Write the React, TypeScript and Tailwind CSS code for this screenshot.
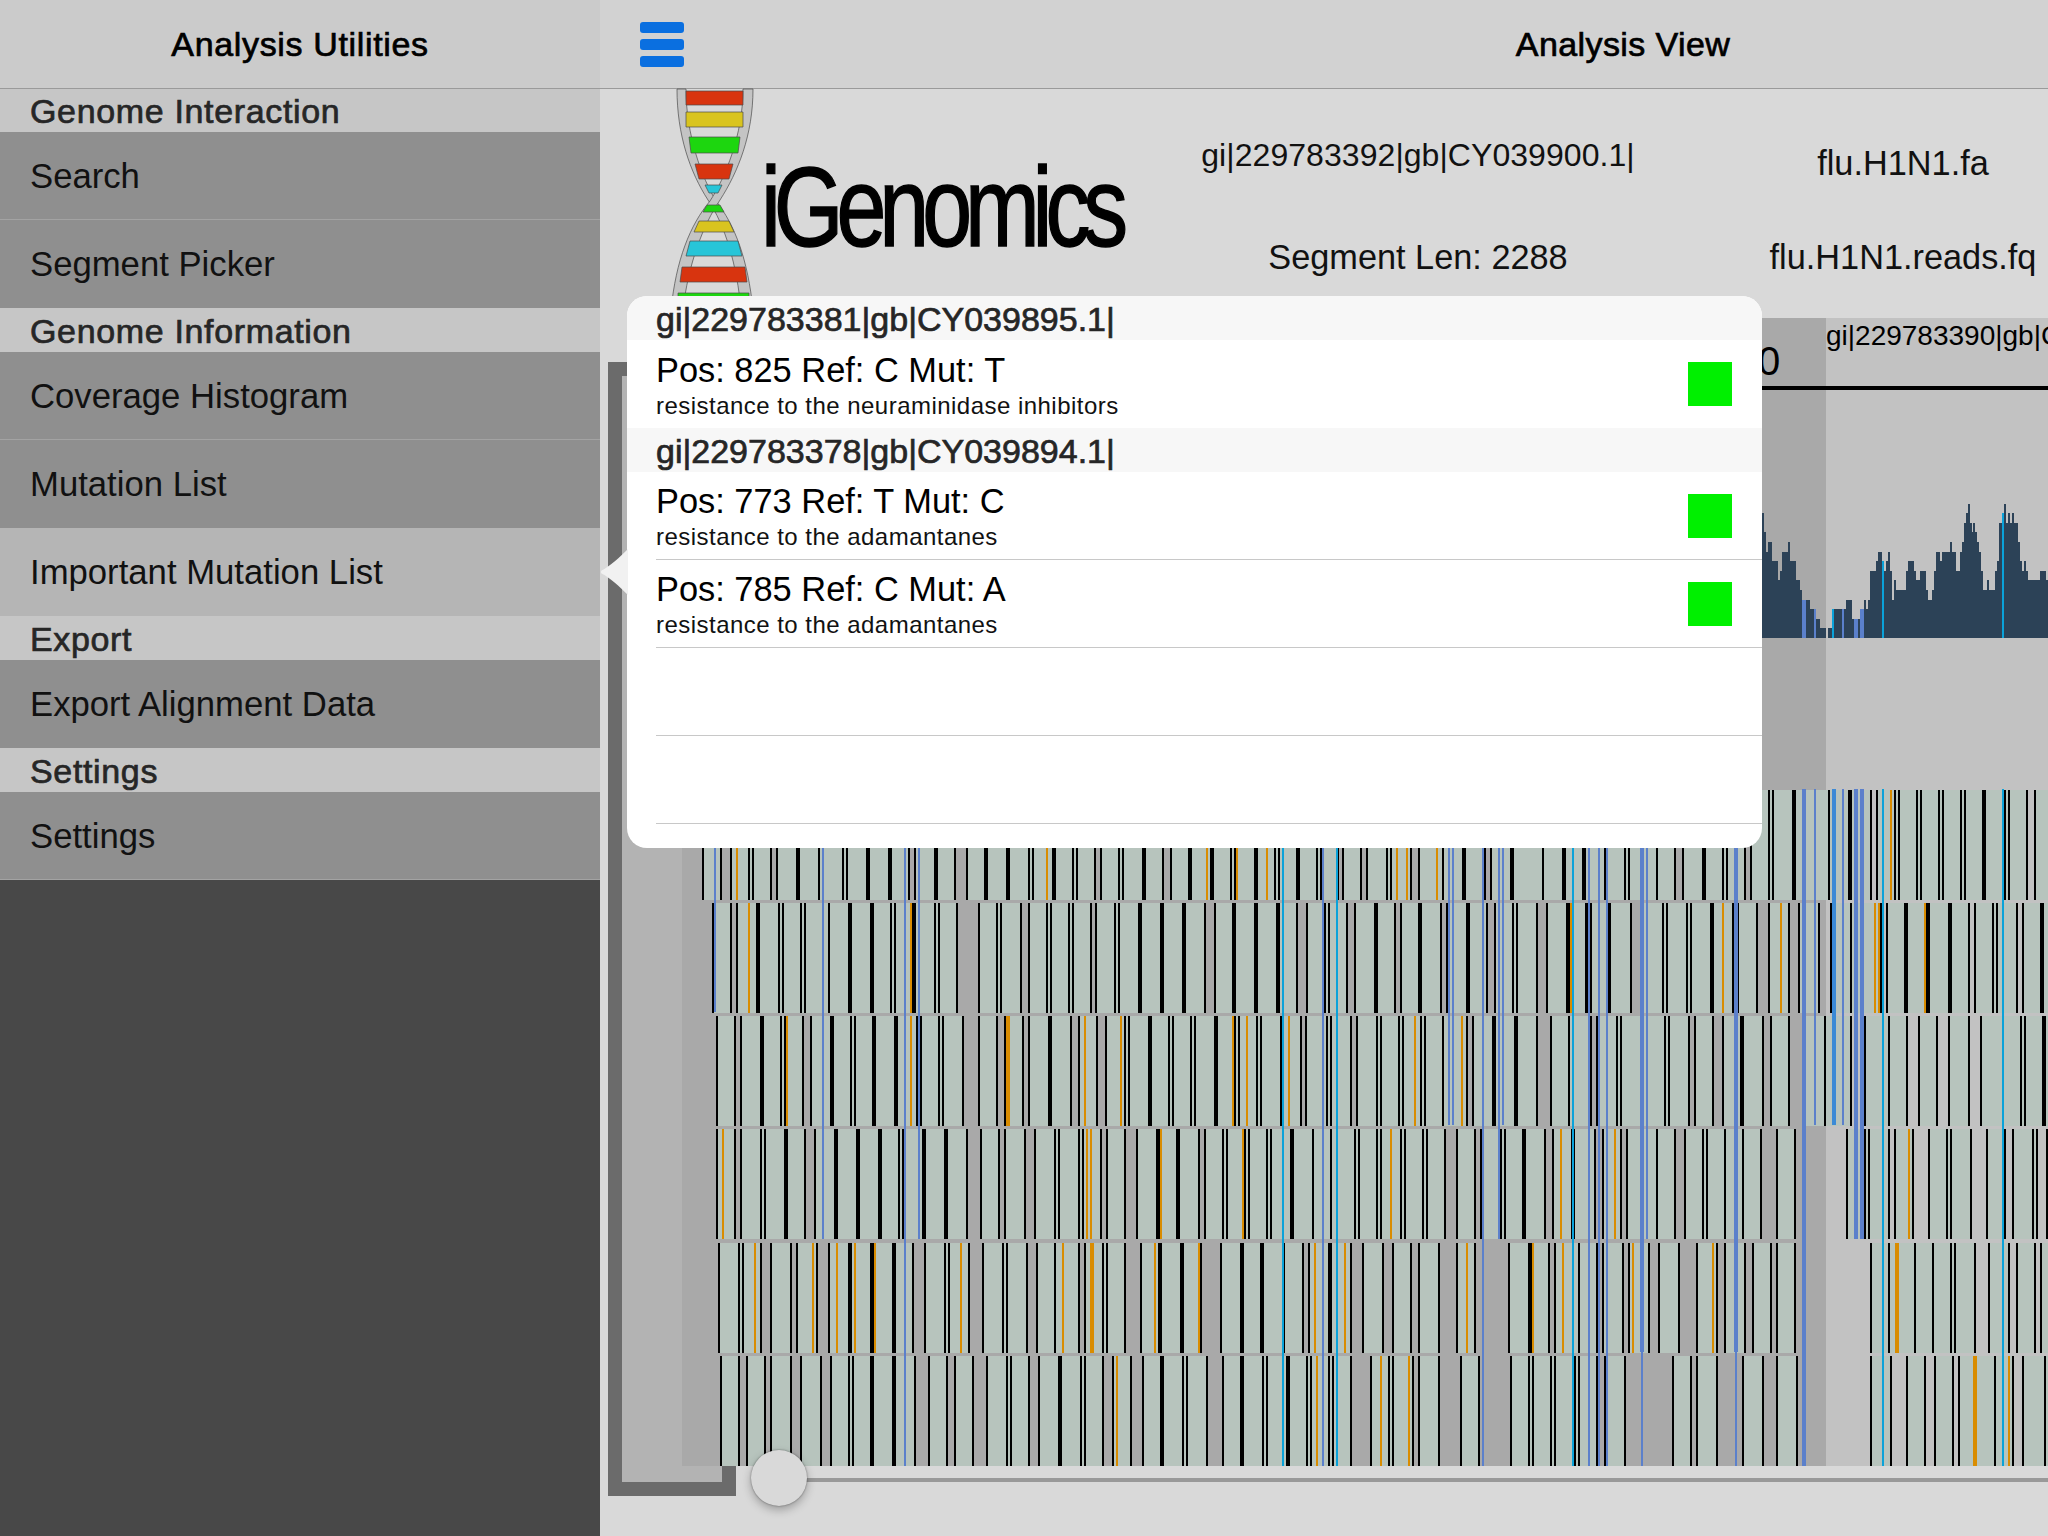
import React from "react";

const sans = "font-['Liberation_Sans',Arial,sans-serif]";
const medium = "[-webkit-text-stroke:0.7px_currentColor]";

type MenuItem = { label: string; selected?: boolean };
const menu: { title: string; items: MenuItem[] }[] = [
  { title: "Genome Interaction", items: [{ label: "Search" }, { label: "Segment Picker" }] },
  { title: "Genome Information", items: [{ label: "Coverage Histogram" }, { label: "Mutation List" }, { label: "Important Mutation List", selected: true }] },
  { title: "Export", items: [{ label: "Export Alignment Data" }] },
  { title: "Settings", items: [{ label: "Settings" }] },
];

// read rows, page coordinates. plain number = thin black, w = wide, o = orange, O = wide orange
const rows = [
  {
    y: 790, start: 702, ends: [[702, 2048]], gaps: [],
    bars: "703 721 731 o737 749 753 771 777 w798 819 843 847 w868 w890 909 915 w936 955 967 w986 w1008 1029 1033 o1047 w1054 1073 1077 1095 1101 1119 1123 w1144 1163 1171 w1190 o1207 w1212 1231 1235 o1237 w1256 o1267 1275 1279 w1298 1317 1321 1338 1343 1361 1367 1387 1391 o1397 o1407 1411 1419 o1437 1443 w1464 1485 1491 w1512 1543 w1564 w1584 1605 1625 1629 1657 1675 1683 w1704 1723 1727 1745 1751 1769 1773 w1794 1829 w1850 1871 1877 o1891 1895 1899 1917 1921 1939 1943 1961 1965 w1984 2005 2009 2027 2035",
  },
  {
    y: 903, start: 712, ends: [[712, 2048]], gaps: [[957, 979], [1631, 1640]],
    bars: "713 731 737 o749 w758 779 783 801 805 829 w850 w872 891 895 o911 w914 935 939 957 979 997 1001 1021 1029 1047 1051 1069 1073 1091 1096 1115 1119 w1140 w1162 w1184 1205 1215 w1234 w1256 w1278 1297 1307 1325 1329 1347 1355 w1376 1395 1401 w1420 1441 1447 w1468 1487 1495 1513 1517 1537 1547 w1568 o1571 w1587 1591 w1609 1631 1663 1667 1687 1691 w1712 o1723 w1734 1738 1757 1769 o1781 1789 1799 1819 1831 1851 o1875 o1879 1881 1887 w1906 o1925 w1928 w1950 1969 1975 1993 1997 2017 2023 w2042",
  },
  {
    y: 1016, start: 716, ends: [[716, 2048]], gaps: [[963, 979], [1789, 1803]],
    bars: "717 735 741 w762 781 785 o787 803 811 w832 851 855 w874 w896 o911 917 921 939 943 963 979 997 1005 O1008 1023 1029 w1050 1071 1079 o1085 1097 1106 o1121 1125 1129 w1150 1169 1173 1191 1195 w1216 o1233 1235 1239 o1247 1257 1261 1281 o1289 1301 1306 1327 1331 1351 1357 1377 1381 1399 1403 o1415 1421 1425 1443 o1462 1467 1473 w1494 w1516 1537 1551 1569 1591 1597 1617 1621 1665 1669 1689 1695 1713 1723 w1742 1763 1771 1789 1825 1851 1865 1889 1907 1919 1937 1949 1969 1981 2021 2025 w2044",
  },
  {
    y: 1129, start: 716, ends: [[716, 1796], [1846, 2048]], gaps: [[967, 981], [1761, 1777]],
    bars: "717 o723 735 741 761 765 w786 805 815 w836 w858 w880 899 903 w924 w946 967 981 999 1005 1025 1035 1055 1059 1079 1083 o1087 o1091 1101 1107 1125 1137 w1158 o1161 w1178 1199 1205 1223 1227 o1243 1245 1249 1267 1271 w1292 1313 1331 1355 1359 1377 1381 o1391 1401 1405 1423 1427 1445 1457 1475 1481 1501 1505 w1524 1545 1553 o1561 w1573 1595 1603 o1615 1621 1627 1657 1675 1685 1703 1707 1725 1743 1761 1777 1795 1847 1865 1869 1889 1895 o1909 1913 1929 1947 1951 1971 1987 2005 2013 2033 2037 2047",
  },
  {
    y: 1243, start: 718, ends: [[718, 1796], [1870, 2048]], gaps: [[969, 983], [1125, 1141], [1201, 1221], [1439, 1457], [1475, 1509], [1679, 1697]],
    bars: "719 739 743 o755 761 771 791 797 o813 817 829 o837 w850 o855 w872 o875 w894 913 925 945 949 o961 969 983 1003 1007 1027 1037 1055 o1063 1079 1085 O1092 1103 1107 1125 1141 o1155 w1160 w1182 o1199 1201 1221 w1242 w1262 1284 1303 1309 o1315 w1330 o1345 1351 1363 1383 1393 1411 1419 1439 1457 o1467 1475 1509 w1530 o1533 1549 1555 o1563 1579 1597 1603 1623 1629 o1633 1649 1659 1679 1697 o1713 1717 1725 1745 1753 1771 1777 1795 1871 1889 O1897 1915 1933 1951 1955 1975 1989 2009 2017 2035 2041",
  },
  {
    y: 1356, start: 720, ends: [[720, 1797], [1870, 2048]], gaps: [[973, 987], [1131, 1143], [1207, 1223], [1351, 1371], [1439, 1461], [1479, 1511], [1625, 1673], [1717, 1743], [1763, 1777]],
    bars: "721 739 747 765 771 791 801 821 831 849 853 w872 w894 915 929 947 955 973 987 1007 1011 1029 1039 w1060 1081 1085 1103 1113 o1117 1131 1143 w1162 1183 1187 1207 1223 w1242 1263 1267 w1288 1307 1311 o1317 1329 1333 1351 1371 o1381 1389 1393 o1409 1413 1419 1439 1461 1479 1511 1529 1533 1551 1555 1575 1579 1597 1605 1625 1673 1691 1697 1717 1743 1763 1777 1797 1871 1891 1907 1925 1935 1953 1959 O1975 1995 o2009 2013 2023 2045",
  },
];

// x, width, top, bottom, colour
const BLUE = "#5b80cb";
const CYAN = "#0aa2d9";
const columns: [number, number, number, number, string][] = [
  [715, 2, 789, 1012, BLUE], [823, 2, 789, 1239, BLUE], [905, 2, 789, 1466, BLUE], [919, 2, 789, 1239, BLUE],
  [1283, 2, 789, 1466, CYAN], [1323, 2, 789, 1466, BLUE], [1337, 2, 789, 1466, CYAN], [1449, 2, 789, 1125, BLUE],
  [1453, 2, 789, 1125, BLUE], [1483, 2, 789, 1466, BLUE], [1499, 2, 789, 1239, BLUE], [1503, 2, 789, 1125, BLUE],
  [1573, 2, 789, 1466, CYAN], [1589, 2, 789, 1466, BLUE], [1599, 2, 789, 1466, BLUE], [1607, 2, 789, 1466, BLUE],
  [1642, 4, 789, 1352, BLUE], [1642, 2, 1352, 1466, BLUE], [1647, 2, 789, 1239, BLUE], [1736, 4, 789, 1352, BLUE],
  [1736, 2, 1352, 1466, BLUE], [1804, 4, 789, 1466, BLUE], [1815, 2, 789, 1125, BLUE], [1834, 4, 789, 1125, "#3b8ad6"],
  [1843, 2, 789, 1125, BLUE], [1856, 4, 789, 1239, BLUE], [1862, 4, 789, 1239, BLUE], [1883, 2, 789, 1466, CYAN],
  [2003, 2, 789, 1466, CYAN],
];

// coverage peaks past the popover: [end in 3x crop units, level, kind]
const hist: [number, number, string?][] = [
  [192, 13], [198, 11], [204, 9], [216, 10], [234, 8], [240, 6], [246, 7], [264, 9], [270, 10], [288, 8], [300, 6], [306, 5],
  [318, 4, "b"], [330, 4], [342, 3], [348, 3, "b"], [360, 2], [378, 1], [384, 0], [396, 1], [402, 3, "c"], [426, 3], [432, 3, "b"],
  [438, 3], [456, 4], [462, 2], [474, 2, "b"], [480, 2], [492, 3, "b"], [498, 4], [504, 3], [510, 4], [528, 7], [534, 8], [546, 9],
  [552, 8, "c"], [558, 7], [564, 8], [570, 9], [576, 7], [582, 4], [588, 6], [618, 5], [624, 7], [642, 8], [648, 7], [660, 6],
  [678, 7], [684, 5], [696, 4], [702, 5], [708, 7], [720, 9], [726, 8], [750, 9], [756, 10], [768, 9], [780, 7], [786, 9], [792, 10],
  [798, 12], [804, 13], [810, 14], [816, 12], [820, 11], [826, 12], [832, 11], [838, 10], [844, 9], [850, 7], [862, 5], [868, 6],
  [886, 5], [892, 7], [898, 8], [906, 12], [912, 13, "c"], [918, 14], [924, 12], [930, 13], [936, 12], [942, 13], [954, 12],
  [960, 10], [966, 8], [972, 7], [978, 8], [984, 7], [1020, 6], [1038, 7], [1044, 6],
];

function parseBars(src: string) {
  return src.split(" ").map((t) => {
    const kind = /^[woO]/.test(t) ? t[0] : "";
    return { x: Number(kind ? t.slice(1) : t), kind };
  });
}

function ReadRow({ row }: { row: (typeof rows)[number] }) {
  const bars = parseBars(row.bars);
  const black = bars.filter((b) => b.kind === "" || b.kind === "w");
  const gaps: number[][] = [...row.gaps];
  black.forEach((b, i) => {
    const next = black[i + 1];
    if (next && next.x - b.x >= 5 && next.x - b.x <= 16) gaps.push([b.x, next.x]);
  });
  gaps.sort((a, b) => a[0] - b[0]);

  const fills: number[][] = [];
  row.ends.forEach(([from, to]) => {
    let at = from;
    gaps.forEach(([a, b]) => {
      if (a >= to || b <= from) return;
      if (a > at) fills.push([at, a]);
      at = Math.max(at, b);
    });
    if (at < to) fills.push([at, to]);
  });

  return (
    <g shapeRendering="crispEdges">
      {fills.map(([a, b]) => (
        <rect key={a} x={a} y={row.y} width={b - a} height={110} fill="#b7c4bd" />
      ))}
      {bars.map((b) => {
        const wide = b.kind === "w" || b.kind === "O";
        const orange = b.kind === "o" || b.kind === "O";
        return (
          <rect
            key={b.x + b.kind}
            x={b.x - (wide ? 2 : 1)}
            y={row.y}
            width={wide ? 4 : 2}
            height={110}
            fill={orange ? "#d98c00" : "#000"}
          />
        );
      })}
    </g>
  );
}

function Histogram() {
  let prev = 186;
  return (
    <g shapeRendering="crispEdges">
      {hist.map(([end, level, kind]) => {
        const x = 1700 + prev / 3;
        const w = (end - prev) / 3;
        prev = end;
        const fill = kind === "b" ? "#5b80cb" : kind === "c" ? "#0aa2d9" : "#2c4257";
        return <rect key={end} x={x} y={638 - level * 9.6} width={w} height={level * 9.6} fill={fill} />;
      })}
    </g>
  );
}

function Logo() {
  const stroke = { stroke: "#4a4a4a", strokeWidth: 0.7 };
  const rungs: [string, string][] = [
    ["686,91 743,91 743,105 686,105", "#d8340f"],
    ["686,112 743,112 743,127 686,127", "#d9c41f"],
    ["689,137 740,137 738,153 691,153", "#1dd60f"],
    ["695,164 733,164 729,179 699,179", "#d8340f"],
    ["705,185 722,185 718,193 709,193", "#27c5d8"],
    ["707,205 720,205 724,212 703,212", "#1dd60f"],
    ["699,221 729,221 734,232 694,232", "#d9c41f"],
    ["690,241 738,241 742,256 686,256", "#27c5d8"],
    ["682,267 745,267 747,282 680,282", "#d8340f"],
    ["678,293 749,293 749,310 678,310", "#1dd60f"],
  ];
  return (
    <svg viewBox="670 89 460 229" width={460} height={229} className="ml-[70px] shrink-0 overflow-visible">
      <path d="M677 89C677 135 690 172 708 200C725 225 737 265 741 310L753 310C748 260 735 225 716 201C702 178 686 135 686 89Z" fill="#c4c4c4" {...stroke} />
      <path d="M753 89C753 135 738 172 720 200C703 225 688 265 683 310L671 310C676 260 690 225 710 201C725 178 743 135 743 89Z" fill="#c4c4c4" {...stroke} />
      {rungs.map(([points, fill]) => (
        <polygon key={points} points={points} fill={fill} {...stroke} />
      ))}
      <text x={761} y={246} fontSize={114} letterSpacing={-9} textLength={360} lengthAdjust="spacingAndGlyphs" fontFamily="'Liberation Sans',Arial,sans-serif" fill="#000" stroke="#000" strokeWidth={1.5}>
        iGenomics
      </text>
    </svg>
  );
}

function Sidebar() {
  return (
    <aside className="flex w-[600px] shrink-0 flex-col bg-[#484848]">
      <div className="flex h-[89px] shrink-0 items-center justify-center border-b border-[#9a9a9a] bg-[#cbcbcb] pt-[1px]">
        <span className={`text-[34px] tracking-[0.65px] text-black ${medium}`}>Analysis Utilities</span>
      </div>
      {menu.map((section, s) => (
        <div key={section.title}>
          <div className={`flex items-center bg-[#c6c6c6] pl-[30px] pt-[1px] ${s === 0 ? "h-[43px]" : "h-[44px]"}`}>
            <span className={`text-[34px] leading-[40px] tracking-[0.65px] text-[#262626] ${medium}`}>{section.title}</span>
          </div>
          {section.items.map((item, i) => (
            <div key={item.label} className={`h-[88px] ${item.selected ? "bg-[#b5b5b5]" : "bg-[#8f8f8f]"}`}>
              <div className={`flex h-full items-center pl-[30px] ${i < section.items.length - 1 && !section.items[i + 1].selected && !item.selected ? "border-b border-[#a3a3a3]" : ""} ${section.title === "Settings" ? "border-b border-[#a3a3a3]" : ""}`}>
                <span className="text-[34.7px] leading-[40px] text-[#111]">{item.label}</span>
              </div>
            </div>
          ))}
        </div>
      ))}
    </aside>
  );
}

function MutationRow({ pos, note, last }: { pos: string; note: string; last?: boolean }) {
  return (
    <div className="flex h-[88px] pl-[29px]">
      <div className={`flex flex-1 items-center justify-between pr-[30px] ${last ? "" : "border-b border-[#c8c8c8]"}`}>
        <div className="flex flex-col pt-[2px]">
          <span className="text-[34.4px] leading-[40px] text-black">{pos}</span>
          <span className="mt-[1px] text-[24px] leading-[30px] tracking-[0.47px] text-[#111]">{note}</span>
        </div>
        <div className="h-[44px] w-[44px] bg-[#00f000]" />
      </div>
    </div>
  );
}

function Popover() {
  const head = `flex h-[44px] items-center bg-[#f7f7f7] pl-[29px] pt-[2px] text-[34px] leading-[40px] text-[#262626] ${medium}`;
  return (
    <div className="absolute left-[27px] top-[296px] w-[1135px]">
      <svg viewBox="0 0 28 48" width={28} height={48} className="absolute left-[-27px] top-[252px]">
        <path d="M28 1C20 9 9 19 1.500 22.500Q0 24 1.500 25.500C9 29 20 39 28 47Z" fill="#f1f1f1" />
      </svg>
      <div className="h-[552px] overflow-hidden rounded-[20px] bg-white">
        <div className={head}>gi|229783381|gb|CY039895.1|</div>
        <MutationRow pos="Pos: 825 Ref: C Mut: T" note="resistance to the neuraminidase inhibitors" last />
        <div className={head}>gi|229783378|gb|CY039894.1|</div>
        <MutationRow pos="Pos: 773 Ref: T Mut: C" note="resistance to the adamantanes" />
        <MutationRow pos="Pos: 785 Ref: C Mut: A" note="resistance to the adamantanes" />
        <div className="ml-[29px] h-[88px] border-b border-[#c8c8c8]" />
        <div className="ml-[29px] h-[88px] border-b border-[#c8c8c8]" />
      </div>
    </div>
  );
}

function AlignmentChart() {
  return (
    <svg viewBox="600 318 1448 1218" width={1448} height={1218} className="block">
      <g shapeRendering="crispEdges">
        <rect x={608} y={362} width={128} height={1134} fill="#6b6b6b" />
        <rect x={622} y={376} width={100} height={1106} fill="#b3b3b3" />
        <rect x={682} y={318} width={1144} height={1148} fill="#a9a9a9" />
        <rect x={1826} y={318} width={222} height={1148} fill="#c2c2c2" />
        <rect x={1700} y={386} width={348} height={4} fill="#000" />
      </g>
      <text x={1758} y={375} fontSize={40} fontFamily="'Liberation Sans',Arial,sans-serif" fill="#000">0</text>
      <text x={1826} y={345} fontSize={28} fontFamily="'Liberation Sans',Arial,sans-serif" fill="#000">gi|229783390|gb|CY039898.1|</text>
      <Histogram />
      {rows.map((row) => (
        <ReadRow key={row.y} row={row} />
      ))}
      <g shapeRendering="crispEdges">
        {columns.map(([x, w, top, bottom, color], i) => (
          <rect key={i} x={x - w / 2} y={top} width={w} height={bottom - top} fill={color} />
        ))}
        <rect x={779} y={1478} width={1269} height={4} fill="#999999" />
      </g>
    </svg>
  );
}

export default function App() {
  return (
    <div className={`flex h-[1536px] w-[2048px] overflow-hidden ${sans}`}>
      <Sidebar />
      <main className="relative flex min-w-0 flex-1 flex-col bg-[#d9d9d9]">
        <header className="flex h-[89px] shrink-0 items-center border-b border-[#9a9a9a] bg-[#d2d2d2] pl-[40px] pt-[1px]">
          <div className="mr-[514px] flex w-[44px] flex-col gap-[6px]">
            <div className="h-[11px] rounded-[3px] bg-[#0a6fe0]" />
            <div className="h-[11px] rounded-[3px] bg-[#0a6fe0]" />
            <div className="h-[11px] rounded-[3px] bg-[#0a6fe0]" />
          </div>
          <span className={`flex-1 text-center text-[34px] tracking-[0.4px] text-black ${medium}`}>Analysis View</span>
        </header>
        <div className="flex h-[229px] shrink-0 text-[34.3px] leading-[40px] text-[#111]">
          <Logo />
          <div className="flex w-[576px] shrink-0 flex-col items-center gap-[62px] pt-[46px]">
            <span className="whitespace-nowrap text-[32px] tracking-[0.06px]">gi|229783392|gb|CY039900.1|</span>
            <span>Segment Len: 2288</span>
          </div>
          <div className="flex flex-1 flex-col items-center gap-[54px] pl-[52px] pt-[54px]">
            <span className="whitespace-nowrap">flu.H1N1.fa</span>
            <span className="whitespace-nowrap">flu.H1N1.reads.fq</span>
          </div>
        </div>
        <div className="relative flex-1">
          <AlignmentChart />
          <div className="absolute left-[151px] top-[1132px] h-[56px] w-[56px] rounded-full bg-[#d9d9d9] shadow-[0_4px_10px_rgba(0,0,0,0.28),0_0_2px_rgba(0,0,0,0.45)]" />
        </div>
        <Popover />
      </main>
    </div>
  );
}
